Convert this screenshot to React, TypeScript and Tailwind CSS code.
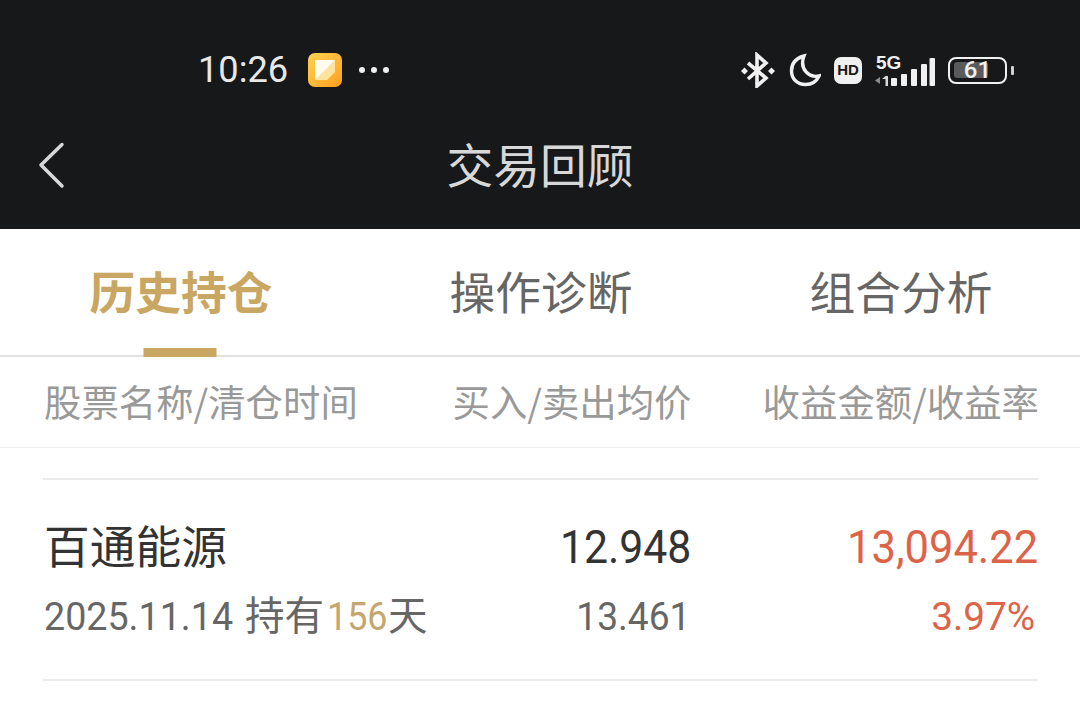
import React from "react";

const cjk = "font-['Noto_Sans_CJK_SC',sans-serif]";
const num = "font-['Roboto','Noto_Sans_CJK_SC',sans-serif]";

function NoteIcon() {
  return (
    <svg width="34" height="34" viewBox="0 0 34 34">
      <defs>
        <linearGradient id="note" x1="0" y1="0" x2="1" y2="1">
          <stop offset="0" stopColor="#ffd24f" />
          <stop offset="1" stopColor="#fd9f20" />
        </linearGradient>
      </defs>
      <rect width="34" height="34" rx="7" fill="url(#note)" />
      <path d="M7 7h20v12l-8 8H7z" fill="#fee3a0" />
      <path d="M7 7h20L7 27z" fill="#fffbee" />
    </svg>
  );
}

function StatusIcons() {
  return (
    <div className="flex items-center gap-[13px] text-[#f0f0f0]">
      <svg className="mr-[1px]" width="34" height="36" viewBox="0 0 34 36" fill="none" stroke="currentColor" strokeWidth="3.600">
        <path d="M7 11l18 15-9 8V3l9 8L7 27" />
        <path d="M0 19l3.500-3.500 3.500 3.500-3.500 3.500z M27 19l3.500-3.500 3.500 3.500-3.500 3.500z" fill="currentColor" stroke="none" />
      </svg>
      <svg width="32" height="34" viewBox="0 0 32 34" fill="none" stroke="currentColor" strokeWidth="3.4">
        <path d="M15 3C8 5 2.500 10 2.500 18c0 8 6 13.500 14 13.500 6 0 11-3 13.500-8.500-10 2-20-7-15-20z" />
      </svg>
      <div className="flex h-[27px] w-[28px] items-center justify-center rounded-[7px] bg-[#f0f0f0] font-['Liberation_Sans',sans-serif] text-[15px] font-bold text-[#17181a]">
        HD
      </div>
      <div className="relative h-[34px] w-[60px]">
        <span className="absolute left-[1px] top-[-2px] font-['Liberation_Sans',sans-serif] text-[19px] font-bold leading-[24px]">5G</span>
        <svg className="absolute left-0 top-0" width="60" height="34" viewBox="0 0 60 34" fill="currentColor">
          <path d="M0 27.500l5-3.500v7z" fill="#8a8a8a" />
          <path d="M7 26l3.500-3 2.500 0v10h-2.500v-7z" fill="#d8d8d8" />
          <rect x="16" y="25" width="6" height="8" rx="1" />
          <rect x="26" y="21" width="6" height="12" rx="1" />
          <rect x="36" y="16" width="6" height="17" rx="1" />
          <rect x="46" y="11" width="6" height="22" rx="1" />
          <rect x="54.500" y="5" width="5.500" height="28" rx="1" />
        </svg>
      </div>
      <div className="flex items-center gap-[4px]">
        <div className="relative h-[27px] w-[59px] rounded-[8px] border-[2.5px] border-[#f0f0f0] p-[3.5px]">
          <div className="h-full w-[34px] rounded-[3px] bg-[#5a5a5a]" />
          <span className="absolute inset-0 text-center font-['Roboto',sans-serif] text-[24px] font-medium leading-[22px]">61</span>
        </div>
        <div className="h-[9px] w-[3px] rounded-[1px] bg-[#d0d0d0]" />
      </div>
    </div>
  );
}

function Tab({ label, active }: { label: string; active?: boolean }) {
  return (
    <div className="relative flex flex-1 items-center justify-center">
      <span className={`pb-[4px] pl-[2px] text-[45.750px] leading-[60px] ${active ? "font-bold text-[#c9a661]" : "text-[#666666]"}`}>{label}</span>
      {active && <div className="absolute bottom-[-2px] left-1/2 h-[9px] w-[73px] -translate-x-1/2 bg-[#c9a661]" />}
    </div>
  );
}

export default function App() {
  return (
    <div className={`h-[718px] w-[1080px] overflow-hidden bg-white ${cjk}`}>
      <header className="h-[229px] bg-[#17181a] text-[#e8e8e8]">
        <div className="flex h-[140px] items-center justify-between pl-[198px] pr-[66px]">
          <div className="flex items-center">
            <span className="font-['Roboto',sans-serif] text-[36.200px] leading-[44px] text-[#e8e8e8]">10:26</span>
            <div className="ml-[20px]"><NoteIcon /></div>
            <div className="ml-[17px] flex gap-[6px]">
              <i className="h-[6px] w-[6px] rounded-full bg-[#eeeeee]" />
              <i className="h-[6px] w-[6px] rounded-full bg-[#eeeeee]" />
              <i className="h-[6px] w-[6px] rounded-full bg-[#eeeeee]" />
            </div>
          </div>
          <StatusIcons />
        </div>
        <div className="relative flex h-[52px] items-center justify-center pb-[7px]">
          <svg className="absolute left-[30px] top-0" width="50" height="52" viewBox="0 0 50 52" fill="none" stroke="#d8d8d8" strokeWidth="3.500" strokeLinecap="round" strokeLinejoin="round">
            <path d="M32 4.500L11 25l21 21" />
          </svg>
          <span className="text-[46.750px] leading-[52px] text-[#d8d8d8]">交易回顾</span>
        </div>
      </header>

      <nav className="flex h-[128px] border-b-2 border-[#e2e2e2]">
        <Tab label="历史持仓" active />
        <Tab label="操作诊断" />
        <Tab label="组合分析" />
      </nav>

      <div className="flex h-[91px] items-center justify-between border-b border-[#f0f0f0] pb-[2px] pl-[44px] pr-[41px] text-[37.400px] text-[#999999]">
        <span className="w-[408px] whitespace-nowrap">股票名称/清仓时间</span>
        <span className="w-[237px] whitespace-nowrap text-right">买入/卖出均价</span>
        <span className="w-[349px] whitespace-nowrap text-right">收益金额/收益率</span>
      </div>

      <div className="ml-[43px] mr-[42px] mt-[30px] flex h-[203px] items-center justify-between border-y-2 border-[#ebebeb]">
        <div className="flex w-[648px] flex-col gap-[15px]">
          <div className="flex h-[60px] items-center justify-between">
            <span className="mb-[6px] pl-[1px] text-[45.750px] leading-[60px] text-[#333333]">百通能源</span>
            <span className={`${num} origin-right scale-x-[0.93] text-[46px] leading-[60px] text-[#333333]`}>12.948</span>
          </div>
          <div className="flex h-[50px] items-center justify-between">
            <div className={`${num} flex items-baseline whitespace-nowrap pl-[1px] leading-[46px] text-[#666666]`}>
              <span className="inline-block w-[201px] origin-left scale-x-[0.965] text-[39px]">2025.11.14</span>
              <span className="text-[39.500px]">持有</span>
              <span className="ml-[3px] inline-block w-[60px] origin-left scale-x-[0.92] text-[39px] text-[#c4a66e]">156</span>
              <span className="ml-[1px] text-[39.500px]">天</span>
            </div>
            <span className={`${num} origin-right scale-x-[0.94] pr-[1px] text-[39.500px] leading-[50px] text-[#666666]`}>13.461</span>
          </div>
        </div>
        <div className="flex flex-col items-end gap-[15px]">
          <span className={`${num} origin-right scale-x-[0.945] text-[46px] leading-[60px] text-[#dd6348]`}>13,094.22</span>
          <span className={`${num} origin-right scale-x-[0.98] pr-[3px] text-[39.500px] leading-[50px] text-[#dd6348]`}>3.97%</span>
        </div>
      </div>
    </div>
  );
}
